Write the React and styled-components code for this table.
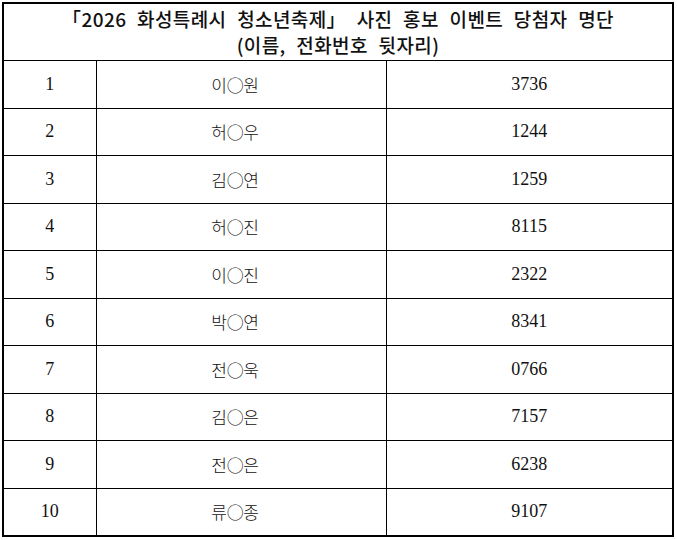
import React from 'react'
import styled, { createGlobalStyle } from 'styled-components'

const GlobalStyle = createGlobalStyle`
  html, body {
    margin: 0;
    padding: 0;
    background: #fff;
  }
`

const winners = [
  { no: 1, name: '이○원', phone: '3736' },
  { no: 2, name: '허○우', phone: '1244' },
  { no: 3, name: '김○연', phone: '1259' },
  { no: 4, name: '허○진', phone: '8115' },
  { no: 5, name: '이○진', phone: '2322' },
  { no: 6, name: '박○연', phone: '8341' },
  { no: 7, name: '전○욱', phone: '0766' },
  { no: 8, name: '김○은', phone: '7157' },
  { no: 9, name: '전○은', phone: '6238' },
  { no: 10, name: '류○종', phone: '9107' },
]

function App() {
  return (
    <Page>
      <GlobalStyle />
      <Table>
        <colgroup>
          <col style={{ width: 93 }} />
          <col style={{ width: 290 }} />
          <col />
        </colgroup>
        <thead>
          <tr>
            <Title colSpan={3}>
              <TitleLine>「2026 화성특례시 청소년축제」 사진 홍보 이벤트 당첨자 명단</TitleLine>
              <TitleLine>(이름, 전화번호 뒷자리)</TitleLine>
            </Title>
          </tr>
        </thead>
        <tbody>
          {winners.map(({ no, name, phone }) => (
            <Row key={no}>
              <Num>{no}</Num>
              <Name>{name}</Name>
              <Num>{phone}</Num>
            </Row>
          ))}
        </tbody>
      </Table>
    </Page>
  )
}

export default App

const Page = styled.div`
  padding: 2px 0 0 2px;
  width: 677px;
  height: 540px;
  box-sizing: border-box;
`
const Table = styled.table`
  width: 672px;
  border-collapse: collapse;
  table-layout: fixed;
  border: 2px solid #000;

  td, th {
    border: 1.5px solid #000;
    padding: 0;
    text-align: center;
    color: #111;
  }
`
const Title = styled.th`
  height: 56px;
  font-family: 'Noto Sans CJK KR', 'Noto Sans', sans-serif;
  font-size: 19px;
  font-weight: 500;
  letter-spacing: 0.4px;
  word-spacing: 6px;
`
const TitleLine = styled.div`
  line-height: 22px;
  & + & {
    margin-top: 4px;
  }
`
const Row = styled.tr`
  height: 47.5px;
`
const Num = styled.td`
  font-family: 'Liberation Serif', 'Times New Roman', serif;
  font-size: 18px;
`
const Name = styled.td`
  font-family: 'Noto Sans CJK KR', sans-serif;
  font-size: 17px;
  font-weight: 300;
  letter-spacing: -0.3px;
  && {
    padding-right: 12px;
  }
`
